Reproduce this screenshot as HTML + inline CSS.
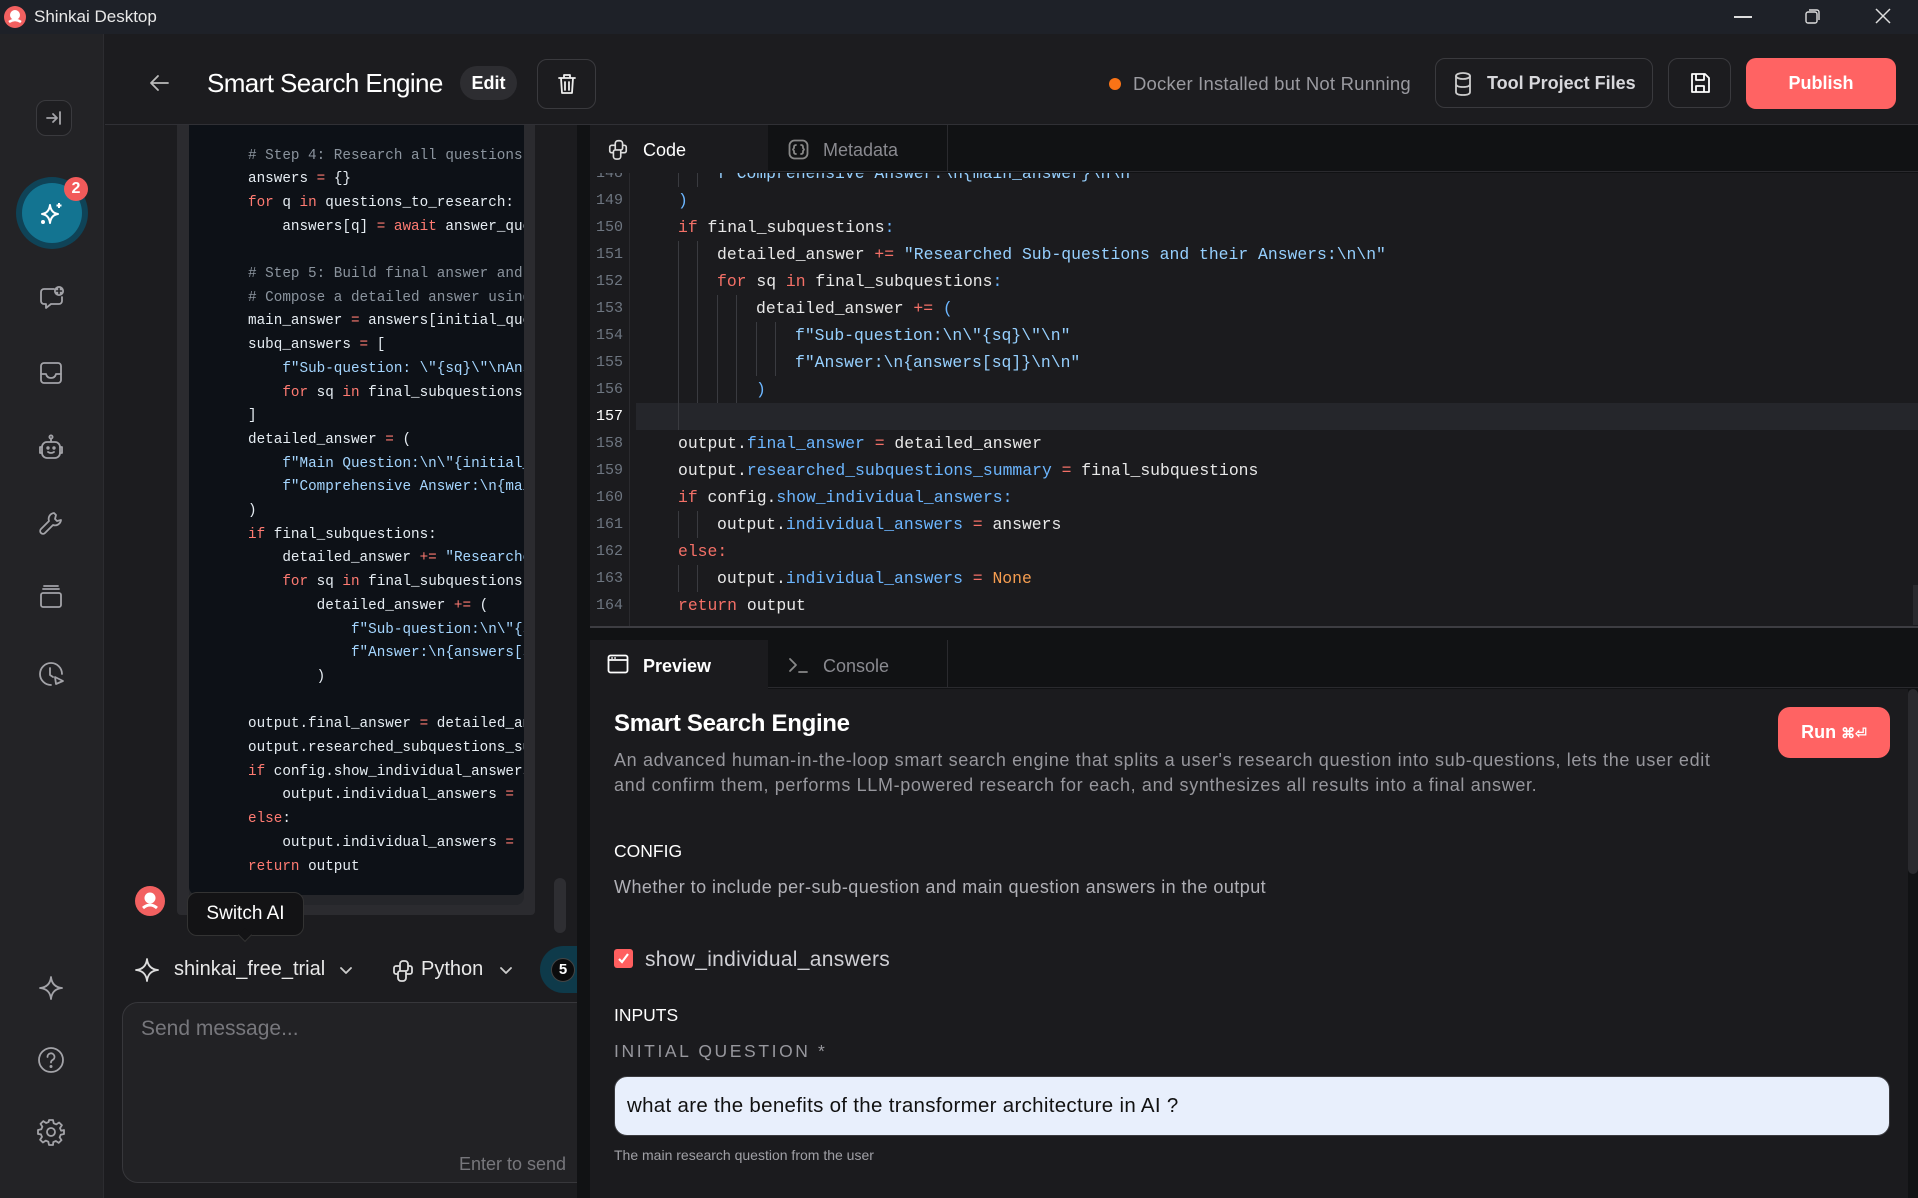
<!DOCTYPE html>
<html><head><meta charset="utf-8">
<style>
*{margin:0;padding:0;box-sizing:border-box}
body{width:1918px;height:1198px;overflow:hidden;background:#1c1c1f;font-family:"Liberation Sans",sans-serif;position:relative;color:#fff}
.a{position:absolute}
.mono{font-family:"Liberation Mono",monospace}
.ic{position:absolute;fill:none;stroke:#a3a3a8;stroke-width:1.8;stroke-linecap:round;stroke-linejoin:round}
.cl{position:absolute;left:0;height:23.7px;line-height:23.7px;white-space:pre;font-size:14.3px;color:#e6edf3}
.k{color:#ff7b72}.c{color:#8b949e}.s{color:#a5d6ff}
.rl{position:absolute;left:0;right:0;height:27px;line-height:27px;white-space:pre;font-size:16.4px;color:#e8e8e8}
.rl .n{position:absolute;left:0;width:33px;text-align:right;color:#6e7681;font-size:15px}
.rl .t{position:absolute}
.rk{color:#f47067}.rs{color:#96d0ff}.rp{color:#6cb6ff}.ro{color:#f69d50}
.g{position:absolute;top:0;bottom:0;width:1px;background:#3a3b40}
</style></head><body>
<!-- title bar -->
<div class="a" style="left:0;top:0;width:1918px;height:34px;background:#1e2128"></div>
<svg class="a" style="left:3px;top:5px" width="24" height="24" viewBox="0 0 24 24"><circle cx="12" cy="12" r="11" fill="#f26060"/><circle cx="12" cy="10" r="5" fill="#fff"/><path d="M6 17 Q12 13 18 17" stroke="#fff" stroke-width="2.5" fill="none"/></svg>
<div class="a" style="left:34px;top:7px;font-size:17px;color:#e8e8e8">Shinkai Desktop</div>
<div class="a" style="left:1734px;top:16px;width:18px;height:1.5px;background:#ddd"></div>
<svg class="a" style="left:1804px;top:7px" width="18" height="18" viewBox="0 0 18 18" fill="none" stroke="#ddd" stroke-width="1.4"><rect x="2" y="5" width="11" height="11" rx="2"/><path d="M5 3 h8 a2 2 0 0 1 2 2 v8"/></svg>
<svg class="a" style="left:1874px;top:7px" width="18" height="18" viewBox="0 0 18 18" stroke="#ddd" stroke-width="1.5"><path d="M2 2 L16 16 M16 2 L2 16"/></svg>

<!-- sidebar -->
<div class="a" style="left:0;top:34px;width:104px;height:1164px;background:#232326;border-right:1px solid #2c2c30"></div>
<div class="a" style="left:36px;top:100px;width:36px;height:36px;border:1px solid #3a3a3e;border-radius:10px;background:#1e1e21"></div>
<svg class="ic" style="left:44px;top:108px" width="20" height="20" viewBox="0 0 20 20"><path d="M3 10h10M9 6l4 4-4 4M16 4v12"/></svg>
<div class="a" style="left:16px;top:177px;width:72px;height:72px;border-radius:50%;background:#0f4357"></div>
<div class="a" style="left:22px;top:183px;width:60px;height:60px;border-radius:50%;background:#137491"></div>
<svg class="a" style="left:39px;top:200px" width="26" height="26" viewBox="0 0 26 26" fill="none" stroke="#fff" stroke-width="2" stroke-linejoin="round"><path d="M11 5 Q12 13 19 14 Q12 15 11 23 Q10 15 3 14 Q10 13 11 5Z"/><path d="M20 3v5M17.5 5.5h5"/><circle cx="4" cy="22" r="1" fill="#fff"/></svg>
<div class="a" style="left:64px;top:177px;width:24px;height:24px;border-radius:50%;background:#f25a5a;font-size:16px;font-weight:bold;text-align:center;line-height:24px">2</div>
<svg class="ic" style="left:38px;top:284px" width="28" height="28" viewBox="0 0 28 28"><path d="M16 5H6a3 3 0 0 0-3 3v9a3 3 0 0 0 3 3h2v4l5-4h8a3 3 0 0 0 3-3v-4"/><circle cx="21" cy="7" r="5" fill="#a3a3a8" stroke="none"/><path d="M21 4.5v5M18.5 7h5" stroke="#232326" stroke-width="1.6"/></svg>
<svg class="ic" style="left:39px;top:361px" width="24" height="24" viewBox="0 0 24 24"><rect x="2" y="2" width="20" height="20" rx="3"/><path d="M2 13h5q1 4 5 4t5-4h5"/></svg>
<svg class="ic" style="left:38px;top:434px" width="26" height="28" viewBox="0 0 26 28"><circle cx="13" cy="3" r="1.6"/><path d="M13 5v3"/><rect x="4" y="8" width="18" height="16" rx="5"/><path d="M4 13H2v6h2M22 13h2v6h-2M10 18q3 2 6 0"/><circle cx="10" cy="14" r=".8" fill="#a3a3a8"/><circle cx="16" cy="14" r=".8" fill="#a3a3a8"/></svg>
<svg class="ic" style="left:38px;top:510px" width="26" height="26" viewBox="0 0 26 26"><path d="M16 3a6 6 0 0 0-5 8L3 19a2.5 2.5 0 0 0 4 4l8-8a6 6 0 0 0 8-5l-4 1-2-2 1-4z"/></svg>
<svg class="ic" style="left:39px;top:585px" width="24" height="24" viewBox="0 0 24 24"><rect x="2" y="8" width="20" height="14" rx="2"/><path d="M4 4h16M5 1h14"/></svg>
<svg class="ic" style="left:37px;top:660px" width="28" height="28" viewBox="0 0 28 28"><path d="M25 14A11 11 0 1 0 14 25"/><path d="M13 8v7l3 2"/><path d="M18 17l8 4-7 3z"/></svg>
<svg class="ic" style="left:38px;top:975px" width="26" height="26" viewBox="0 0 26 26"><path d="M13 2Q14 12 24 13Q14 14 13 24Q12 14 2 13Q12 12 13 2Z"/></svg>
<svg class="ic" style="left:37px;top:1046px" width="28" height="28" viewBox="0 0 28 28"><circle cx="14" cy="14" r="12"/><path d="M10.5 11a3.5 3.5 0 1 1 5 3c-1 .6-1.5 1.2-1.5 2.5"/><circle cx="14" cy="20.5" r=".6" fill="#a3a3a8"/></svg>
<svg class="ic" style="left:37px;top:1118px" width="28" height="28" viewBox="0 0 28 28"><circle cx="14" cy="14" r="4"/><path d="M12 2h4l.7 3.3 2.6 1.1 2.8-1.9 2.8 2.8-1.9 2.8 1.1 2.6L27 12v4l-3.3.7-1.1 2.6 1.9 2.8-2.8 2.8-2.8-1.9-2.6 1.1L16 27h-4l-.7-3.3-2.6-1.1-2.8 1.9-2.8-2.8 1.9-2.8-1.1-2.6L1 16v-4l3.3-.7 1.1-2.6-1.9-2.8 2.8-2.8 2.8 1.9 2.6-1.1z"/></svg>

<!-- header -->
<div class="a" style="left:105px;top:124px;width:1813px;height:1px;background:#303035"></div>
<svg class="ic" style="left:148px;top:73px;stroke:#bbb" width="22" height="20" viewBox="0 0 22 20"><path d="M20 10H3M10 3L3 10l7 7"/></svg>
<div class="a" style="left:207px;top:68px;font-size:26px;font-weight:500;color:#fff;letter-spacing:-.6px">Smart Search Engine</div>
<div class="a" style="left:460px;top:66px;width:57px;height:34px;border-radius:17px;background:#2d2d31;font-size:18px;font-weight:bold;text-align:center;line-height:34px">Edit</div>
<div class="a" style="left:537px;top:59px;width:59px;height:50px;border:1px solid #3a3a3e;border-radius:10px"></div>
<svg class="ic" style="left:556px;top:73px;stroke:#eee" width="22" height="22" viewBox="0 0 22 22"><path d="M3 5h16M8 5V2h6v3M5 5l1 15h10l1-15M9 9v8M13 9v8"/></svg>
<div class="a" style="left:1109px;top:78px;width:12px;height:12px;border-radius:50%;background:#f97316"></div>
<div class="a" style="left:1133px;top:73px;font-size:18.5px;color:#9a9aa0;letter-spacing:.2px">Docker Installed but Not Running</div>
<div class="a" style="left:1435px;top:58px;width:218px;height:50px;border:1px solid #3a3a3e;border-radius:10px"></div>
<svg class="ic" style="left:1454px;top:72px;stroke:#ccc" width="18" height="24" viewBox="0 0 18 24"><ellipse cx="9" cy="4" rx="7" ry="3"/><path d="M2 4v16q0 3 7 3t7-3V4M2 12q0 3 7 3t7-3"/></svg>
<div class="a" style="left:1487px;top:73px;font-size:18px;font-weight:bold;color:#d8d8dc">Tool Project Files</div>
<div class="a" style="left:1668px;top:58px;width:63px;height:50px;border:1px solid #3a3a3e;border-radius:10px"></div>
<svg class="ic" style="left:1689px;top:72px;stroke:#fff" width="22" height="22" viewBox="0 0 22 22"><path d="M3 2h13l4 4v14H3z M7 2v6h8V2 M7 20v-6h8v6"/></svg>
<div class="a" style="left:1746px;top:58px;width:150px;height:51px;border-radius:10px;background:#ff6363;font-size:18px;font-weight:bold;text-align:center;line-height:51px">Publish</div>

<!-- chat panel -->
<div class="a" style="left:177px;top:125px;width:358px;height:790px;background:#2b2b2f;border-radius:0 0 4px 4px"></div>
<div class="a" style="left:189px;top:125px;width:335px;height:780px;background:#25262a;border-radius:0 0 8px 8px"></div>
<div class="a mono" style="left:189px;top:125px;width:335px;height:770px;background:#0d1117;overflow:hidden;border-radius:0 0 8px 8px">
<div style="position:absolute;left:59px;top:19.5px">
<div class="cl" style="top:0"><span class="c"># Step 4: Research all questions</span></div>
<div class="cl" style="top:23.7px">answers <span class="k">=</span> {}</div>
<div class="cl" style="top:47.4px"><span class="k">for</span> q <span class="k">in</span> questions_to_research:</div>
<div class="cl" style="top:71.1px">    answers[q] <span class="k">=</span> <span class="k">await</span> answer_question</div>
<div class="cl" style="top:118.5px"><span class="c"># Step 5: Build final answer and</span></div>
<div class="cl" style="top:142.2px"><span class="c"># Compose a detailed answer using</span></div>
<div class="cl" style="top:165.9px">main_answer <span class="k">=</span> answers[initial_question]</div>
<div class="cl" style="top:189.6px">subq_answers <span class="k">=</span> [</div>
<div class="cl" style="top:213.3px">    <span class="s">f"Sub-question: \"{sq}\"\nAnswer</span></div>
<div class="cl" style="top:237px">    <span class="k">for</span> sq <span class="k">in</span> final_subquestions</div>
<div class="cl" style="top:260.7px">]</div>
<div class="cl" style="top:284.4px">detailed_answer <span class="k">=</span> (</div>
<div class="cl" style="top:308.1px">    <span class="s">f"Main Question:\n\"{initial_q</span></div>
<div class="cl" style="top:331.8px">    <span class="s">f"Comprehensive Answer:\n{main</span></div>
<div class="cl" style="top:355.5px">)</div>
<div class="cl" style="top:379.2px"><span class="k">if</span> final_subquestions:</div>
<div class="cl" style="top:402.9px">    detailed_answer <span class="k">+=</span> <span class="s">"Researched</span></div>
<div class="cl" style="top:426.6px">    <span class="k">for</span> sq <span class="k">in</span> final_subquestions:</div>
<div class="cl" style="top:450.3px">        detailed_answer <span class="k">+=</span> (</div>
<div class="cl" style="top:474px">            <span class="s">f"Sub-question:\n\"{sq}</span></div>
<div class="cl" style="top:497.7px">            <span class="s">f"Answer:\n{answers[sq]}</span></div>
<div class="cl" style="top:521.4px">        )</div>
<div class="cl" style="top:568.8px">output.final_answer <span class="k">=</span> detailed_answer</div>
<div class="cl" style="top:592.5px">output.researched_subquestions_summary</div>
<div class="cl" style="top:616.2px"><span class="k">if</span> config.show_individual_answers:</div>
<div class="cl" style="top:639.9px">    output.individual_answers <span class="k">=</span></div>
<div class="cl" style="top:663.6px"><span class="k">else</span>:</div>
<div class="cl" style="top:687.3px">    output.individual_answers <span class="k">=</span></div>
<div class="cl" style="top:711px"><span class="k">return</span> output</div>
</div></div>
<div class="a" style="left:554px;top:878px;width:12px;height:55px;border-radius:6px;background:#2e2e32"></div>
<svg class="a" style="left:135px;top:886px" width="30" height="30" viewBox="0 0 30 30"><circle cx="15" cy="15" r="15" fill="#f26060"/><circle cx="15" cy="12" r="5.5" fill="#fff"/><path d="M8 22 Q15 16 22 22" stroke="#fff" stroke-width="3" fill="none"/></svg>
<div class="a" style="left:187px;top:892px;width:117px;height:44px;background:#131315;border:1px solid #333;border-radius:10px;font-size:19px;text-align:center;line-height:42px">Switch AI</div>
<div class="a" style="left:240px;top:930px;width:10px;height:10px;background:#131315;border-right:1px solid #333;border-bottom:1px solid #333;transform:rotate(45deg)"></div>
<svg class="ic" style="left:134px;top:957px;stroke:#ddd" width="26" height="26" viewBox="0 0 26 26"><path d="M13 2Q14 12 24 13Q14 14 13 24Q12 14 2 13Q12 12 13 2Z"/></svg>
<div class="a" style="left:174px;top:958px;font-size:20px;color:#e8e8e8">shinkai_free_trial</div>
<svg class="ic" style="left:340px;top:965px;stroke:#ccc" width="12" height="10" viewBox="0 0 12 10"><path d="M1 3l5 5 5-5"/></svg>
<svg class="ic" style="left:391px;top:958px;stroke:#ddd" width="24" height="24" viewBox="0 0 24 24"><path d="M9 12V6a3 3 0 0 1 3-3h2a3 3 0 0 1 3 3v5a2 2 0 0 1-2 2H9a2 2 0 0 0-2 2v5a3 3 0 0 0 3 3h2a3 3 0 0 0 3-3v-6M9 8H5a2 2 0 0 0-2 2v4a2 2 0 0 0 2 2h2M15 16h4a2 2 0 0 0 2-2v-4a2 2 0 0 0-2-2h-2"/></svg>
<div class="a" style="left:421px;top:958px;font-size:20px;color:#e8e8e8">Python</div>
<svg class="ic" style="left:500px;top:965px;stroke:#ccc" width="12" height="10" viewBox="0 0 12 10"><path d="M1 3l5 5 5-5"/></svg>
<div class="a" style="left:540px;top:946px;width:60px;height:47px;border-radius:24px;background:#0e3a4a"></div>
<div class="a" style="left:551px;top:958px;width:24px;height:24px;border-radius:50%;background:#0b0b0c;border:1px solid #444;font-size:15px;font-weight:bold;text-align:center;line-height:22px">5</div>
<div class="a" style="left:122px;top:1002px;width:480px;height:181px;border:1px solid #37373b;border-radius:16px;background:#222225"></div>
<div class="a" style="left:141px;top:1017px;font-size:21px;color:#77777c">Send message...</div>
<div class="a" style="left:459px;top:1154px;font-size:18px;color:#77777c">Enter to send</div>

<!-- right panel -->
<div class="a" style="left:577px;top:125px;width:1341px;height:1073px;background:#111214"></div>
<div class="a" style="left:590px;top:125px;width:1328px;height:47px;background:#111214;border-bottom:1px solid #2a2a2e"></div>
<div class="a" style="left:590px;top:125px;width:178px;height:48px;background:#1b1b1e"></div>
<div class="a" style="left:768px;top:125px;width:180px;height:47px;border-right:1px solid #2a2a2e"></div>
<svg class="ic" style="left:607px;top:138px;stroke:#ddd" width="22" height="22" viewBox="0 0 24 24"><path d="M9 12V6a3 3 0 0 1 3-3h2a3 3 0 0 1 3 3v5a2 2 0 0 1-2 2H9a2 2 0 0 0-2 2v5a3 3 0 0 0 3 3h2a3 3 0 0 0 3-3v-6M9 8H5a2 2 0 0 0-2 2v4a2 2 0 0 0 2 2h2M15 16h4a2 2 0 0 0 2-2v-4a2 2 0 0 0-2-2h-2"/></svg>
<div class="a" style="left:643px;top:140px;font-size:18px;color:#fff">Code</div>
<svg class="ic" style="left:788px;top:139px;stroke:#888" width="21" height="21" viewBox="0 0 21 21"><rect x="1.5" y="1.5" width="18" height="18" rx="5"/><path d="M8 6q-2 0-2 2v1l-1 1.5 1 1.5v1q0 2 2 2M13 6q2 0 2 2v1l1 1.5-1 1.5v1q0 2-2 2"/></svg>
<div class="a" style="left:823px;top:140px;font-size:18px;color:#8a8a90">Metadata</div>

<div class="a mono" style="left:590px;top:173px;width:1328px;height:453px;background:#1b1b1e;overflow:hidden">
<div style="position:absolute;left:39px;top:0;width:1px;height:453px;background:#2a2a2e"></div>
<div style="position:absolute;left:0;right:0;top:-13.5px">
<div class="rl"><span class="n">148</span><i class="g" style="left:88px"></i><i class="g" style="left:107px"></i><span class="t" style="left:127px"><span class="rs">f"Comprehensive Answer:\n{main_answer}\n\n"</span></span></div>
<div class="rl" style="top:27px"><span class="n">149</span><span class="t" style="left:88px"><span class="rp">)</span></span></div>
<div class="rl" style="top:54px"><span class="n">150</span><span class="t" style="left:88px"><span class="rk">if</span> final_subquestions<span class="rp">:</span></span></div>
<div class="rl" style="top:81px"><span class="n">151</span><i class="g" style="left:88px"></i><i class="g" style="left:107px"></i><span class="t" style="left:127px">detailed_answer <span class="rk">+=</span> <span class="rs">"Researched Sub-questions and their Answers:\n\n"</span></span></div>
<div class="rl" style="top:108px"><span class="n">152</span><i class="g" style="left:88px"></i><i class="g" style="left:107px"></i><span class="t" style="left:127px"><span class="rk">for</span> sq <span class="rk">in</span> final_subquestions<span class="rp">:</span></span></div>
<div class="rl" style="top:135px"><span class="n">153</span><i class="g" style="left:88px"></i><i class="g" style="left:107px"></i><i class="g" style="left:127px"></i><i class="g" style="left:146px"></i><span class="t" style="left:166px">detailed_answer <span class="rk">+=</span> <span class="rp">(</span></span></div>
<div class="rl" style="top:162px"><span class="n">154</span><i class="g" style="left:88px"></i><i class="g" style="left:107px"></i><i class="g" style="left:127px"></i><i class="g" style="left:146px"></i><i class="g" style="left:166px"></i><i class="g" style="left:185px"></i><span class="t" style="left:205px"><span class="rs">f"Sub-question:\n\"{sq}\"\n"</span></span></div>
<div class="rl" style="top:189px"><span class="n">155</span><i class="g" style="left:88px"></i><i class="g" style="left:107px"></i><i class="g" style="left:127px"></i><i class="g" style="left:146px"></i><i class="g" style="left:166px"></i><i class="g" style="left:185px"></i><span class="t" style="left:205px"><span class="rs">f"Answer:\n{answers[sq]}\n\n"</span></span></div>
<div class="rl" style="top:216px"><span class="n">156</span><i class="g" style="left:88px"></i><i class="g" style="left:107px"></i><i class="g" style="left:127px"></i><i class="g" style="left:146px"></i><span class="t" style="left:166px"><span class="rp">)</span></span></div>
<div class="rl" style="top:243px;background:#25262b;left:46px"><span class="n" style="left:-46px;color:#fff">157</span><i class="g" style="left:42px"></i></div>
<div class="rl" style="top:270px"><span class="n">158</span><span class="t" style="left:88px">output.<span class="rp">final_answer</span> <span class="rk">=</span> detailed_answer</span></div>
<div class="rl" style="top:297px"><span class="n">159</span><span class="t" style="left:88px">output.<span class="rp">researched_subquestions_summary</span> <span class="rk">=</span> final_subquestions</span></div>
<div class="rl" style="top:324px"><span class="n">160</span><span class="t" style="left:88px"><span class="rk">if</span> config.<span class="rp">show_individual_answers:</span></span></div>
<div class="rl" style="top:351px"><span class="n">161</span><i class="g" style="left:88px"></i><i class="g" style="left:107px"></i><span class="t" style="left:127px">output.<span class="rp">individual_answers</span> <span class="rk">=</span> answers</span></div>
<div class="rl" style="top:378px"><span class="n">162</span><span class="t" style="left:88px"><span class="rk">else:</span></span></div>
<div class="rl" style="top:405px"><span class="n">163</span><i class="g" style="left:88px"></i><i class="g" style="left:107px"></i><span class="t" style="left:127px">output.<span class="rp">individual_answers</span> <span class="rk">=</span> <span class="ro">None</span></span></div>
<div class="rl" style="top:432px"><span class="n">164</span><span class="t" style="left:88px"><span class="rk">return</span> output</span></div>
</div></div>
<div class="a" style="left:590px;top:626px;width:1328px;height:2px;background:#3d3d42"></div>
<div class="a" style="left:1913px;top:585px;width:5px;height:40px;background:#2a2a2e"></div>
<div class="a" style="left:590px;top:640px;width:1328px;height:48px;border-bottom:1px solid #2a2a2e"></div>
<div class="a" style="left:590px;top:640px;width:178px;height:49px;background:#1b1b1e"></div>
<div class="a" style="left:768px;top:640px;width:180px;height:48px;border-right:1px solid #2a2a2e"></div>
<svg class="ic" style="left:607px;top:654px;stroke:#fff" width="22" height="20" viewBox="0 0 22 20"><rect x="1.5" y="1.5" width="19" height="17" rx="2"/><path d="M1.5 6h19M5 4h.1M8 4h.1"/></svg>
<div class="a" style="left:643px;top:656px;font-size:18px;font-weight:bold;color:#fff">Preview</div>
<svg class="ic" style="left:788px;top:656px;stroke:#888" width="22" height="18" viewBox="0 0 22 18"><path d="M2 3l6 6-6 6M11 16h8"/></svg>
<div class="a" style="left:823px;top:656px;font-size:18px;color:#8a8a90">Console</div>

<div class="a" style="left:590px;top:689px;width:1318px;height:509px;background:#1b1b1e"></div>
<div class="a" style="left:1908px;top:689px;width:10px;height:185px;background:#2a2a2e;border-radius:5px"></div>
<div class="a" style="left:614px;top:710px;font-size:24px;font-weight:bold;color:#fff;letter-spacing:-.3px">Smart Search Engine</div>
<div class="a" style="left:614px;top:748px;width:1110px;font-size:18px;letter-spacing:.65px;line-height:25px;color:#97979d">An advanced human-in-the-loop smart search engine that splits a user's research question into sub-questions, lets the user edit and confirm them, performs LLM-powered research for each, and synthesizes all results into a final answer.</div>
<div class="a" style="left:1778px;top:707px;width:112px;height:51px;border-radius:12px;background:#ff6363;font-size:18px;font-weight:bold;text-align:center;line-height:51px">Run <span style="font-size:14px">⌘⏎</span></div>
<div class="a" style="left:614px;top:841px;font-size:17.5px;color:#fff">CONFIG</div>
<div class="a" style="left:614px;top:877px;font-size:18px;letter-spacing:.45px;color:#b0b0b6">Whether to include per-sub-question and main question answers in the output</div>
<div class="a" style="left:614px;top:949px;width:19px;height:19px;border-radius:3px;background:#ff5f5f"></div>
<svg class="a" style="left:616px;top:951px" width="15" height="15" viewBox="0 0 15 15" fill="none" stroke="#fff" stroke-width="2.2"><path d="M3 8l3 3 6-8"/></svg>
<div class="a" style="left:645px;top:948px;font-size:21px;letter-spacing:.3px;color:#cfcfd4">show_individual_answers</div>
<div class="a" style="left:614px;top:1005px;font-size:17.5px;color:#fff">INPUTS</div>
<div class="a" style="left:614px;top:1041px;font-size:17.5px;letter-spacing:2.6px;color:#97979d">INITIAL QUESTION *</div>
<div class="a" style="left:614px;top:1076px;width:1276px;height:60px;border-radius:13px;background:#e8effc;border:1px solid #3a3a3e"></div>
<div class="a" style="left:627px;top:1094px;font-size:20.5px;letter-spacing:.3px;color:#111">what are the benefits of the transformer architecture in AI ?</div>
<div class="a" style="left:614px;top:1147px;font-size:14px;color:#a0a0a6">The main research question from the user</div>
</body></html>
